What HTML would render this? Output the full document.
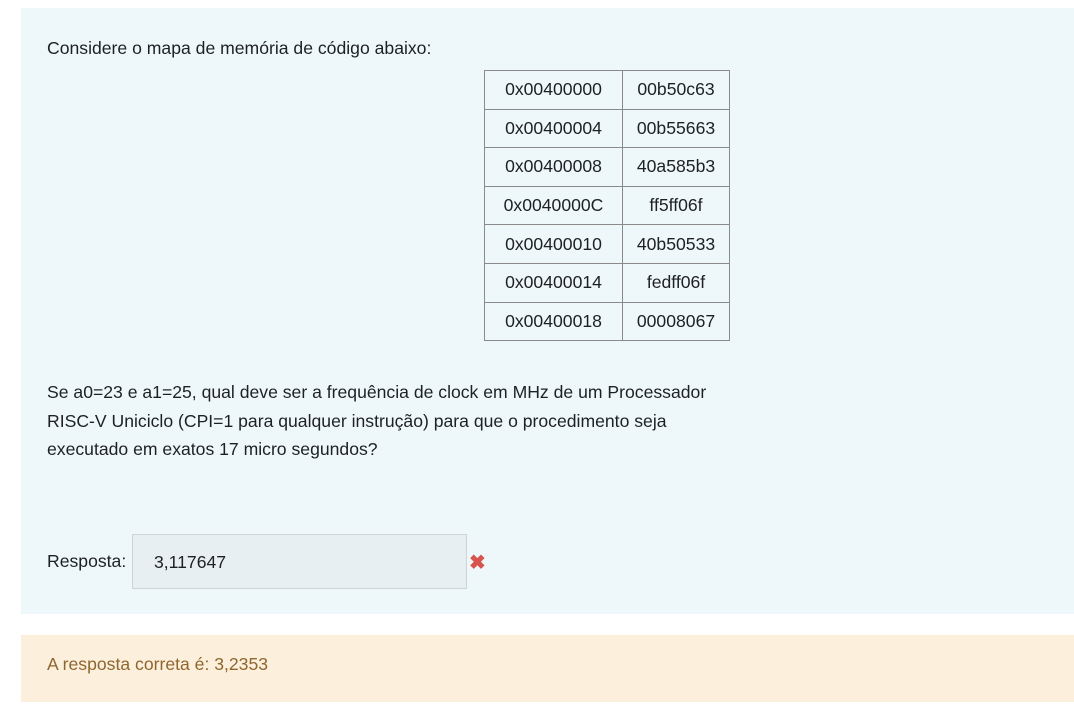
<!DOCTYPE html>
<html><head><meta charset="utf-8"><style>
body{margin:0;width:1074px;height:707px;background:#fff;font-family:"Liberation Sans",sans-serif;color:#1d2125;position:relative;overflow:hidden}
.box{position:absolute;left:21px;top:8px;width:1053px;height:606px;background:#eef7fa}
.t{position:absolute;font-size:17.6px;white-space:nowrap}
table{position:absolute;left:484px;top:70px;border-collapse:collapse;font-size:17.6px}
td{border:1px solid #8a8a8a;height:38.6px;padding:0;text-align:center;box-sizing:border-box}
td.a{width:138px}td.b{width:107px}
.inp{position:absolute;left:132px;top:534px;width:335px;height:55px;background:#e7eff2;border:1px solid #cdd3d6;box-sizing:border-box}
.fb{position:absolute;left:21px;top:635px;width:1053px;height:67px;background:#fcefdc}
</style></head><body>
<div class="box"></div>
<div class="t" style="left:47px;top:38px">Considere o mapa de memória de código abaixo:</div>
<table>
<tr><td class="a">0x00400000</td><td class="b">00b50c63</td></tr>
<tr><td class="a">0x00400004</td><td class="b">00b55663</td></tr>
<tr><td class="a">0x00400008</td><td class="b">40a585b3</td></tr>
<tr><td class="a">0x0040000C</td><td class="b">ff5ff06f</td></tr>
<tr><td class="a">0x00400010</td><td class="b">40b50533</td></tr>
<tr><td class="a">0x00400014</td><td class="b">fedff06f</td></tr>
<tr><td class="a">0x00400018</td><td class="b">00008067</td></tr>
</table>
<div class="t" style="left:47px;top:378px;line-height:28.5px">Se a0=23 e a1=25, qual deve ser a frequência de clock em MHz de um Processador<br>RISC-V Uniciclo (CPI=1 para qualquer instrução) para que o procedimento seja<br>executado em exatos 17 micro segundos?</div>
<div class="t" style="left:47px;top:551px">Resposta:</div>
<div class="inp"></div>
<div class="t" style="left:154px;top:552px">3,117647</div>
<div class="t" style="left:469px;top:550px;color:#d9534f;font-size:20px;font-weight:bold">✖</div>
<div class="fb"></div>
<div class="t" style="left:47px;top:654px;color:#8e662e">A resposta correta é: 3,2353</div>
</body></html>
